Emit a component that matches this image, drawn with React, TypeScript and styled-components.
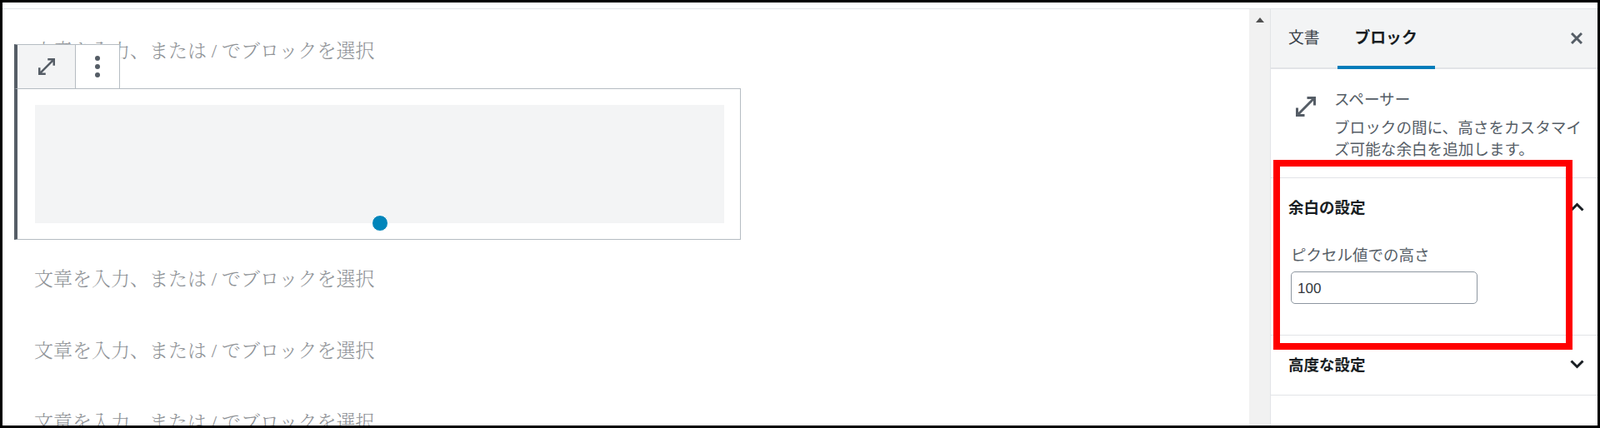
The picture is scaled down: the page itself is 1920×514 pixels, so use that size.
import React from 'react'
import styled, { createGlobalStyle } from 'styled-components'

const GlobalStyle = createGlobalStyle`
  html, body {
    margin: 0;
    padding: 0;
    background: #fff;
  }
  * {
    box-sizing: border-box;
  }
`

const Frame = styled.div`
  width: 1920px;
  height: 514px;
  padding-top: 7px;
  border: 3px solid #000;
  background: #fff;
  overflow: hidden;
  font-family: 'Noto Sans CJK JP', sans-serif;
`

const Workspace = styled.div`
  display: flex;
  height: 100%;
  border-top: 1px solid #e2e4e7;
`

const Editor = styled.main`
  flex: 1;
  min-width: 0;
  padding-top: 34px;
  overflow: hidden;
`

const Placeholder = styled.p`
  margin: 0 0 0 38px;
  height: 34px;
  font-family: 'Liberation Serif', 'Noto Serif CJK JP', 'Noto Sans CJK JP', serif;
  font-size: 23px;
  font-weight: 300;
  line-height: 34px;
  color: #8f9397;
  white-space: nowrap;

  & + & {
    margin-top: 52px;
  }
`

const SpacerBlock = styled.section`
  position: relative;
  width: 872px;
  height: 182px;
  margin: 27px 0 31px 14px;
  padding: 19px 19px 19px 21px;
  border: 1px solid #b5bcc2;
  border-left: 4px solid #555d66;
`

const BlockToolbar = styled.div`
  position: absolute;
  left: -4px;
  bottom: calc(100% + 1px);
  display: flex;
  height: 53px;
  border-top: 1px solid #b5bcc2;
  border-left: 4px solid #555d66;
  background: #fff;
`

const ToolButton = styled.div<{ $active?: boolean; $width: number }>`
  display: flex;
  align-items: center;
  justify-content: center;
  width: ${(p) => p.$width}px;
  border-right: 1px solid #b5bcc2;
  background: ${(p) => (p.$active ? '#f3f4f5' : '#fff')};
  color: #555d66;
`

const SpacerArea = styled.div`
  position: relative;
  height: 142px;
  background: #f3f4f5;
`

const ResizeHandle = styled.span`
  position: absolute;
  left: 50%;
  bottom: -10px;
  width: 20px;
  height: 20px;
  margin-left: -10px;
  border: 1px solid #fff;
  border-radius: 50%;
  background: #0085ba;
`

const Scrollbar = styled.div`
  flex: none;
  display: flex;
  justify-content: center;
  width: 25px;
  padding-top: 10px;
  background: #f1f1f1;
`

const ScrollArrow = styled.span`
  width: 0;
  height: 0;
  border-left: 5px solid transparent;
  border-right: 5px solid transparent;
  border-bottom: 6px solid #505050;
`

const Sidebar = styled.aside`
  position: relative;
  flex: none;
  width: 393px;
  border-left: 1px solid #e2e4e7;
  color: #191e23;
`

const SidebarHeader = styled.header`
  display: flex;
  align-items: stretch;
  height: 72px;
  padding-right: 18px;
  border-bottom: 2px solid #e2e4e7;
  background: #f3f4f5;
`

const Tab = styled.div<{ $active?: boolean }>`
  display: flex;
  align-items: center;
  height: 72px;
  padding: 0 21px 4px;
  border-bottom: 4px solid ${(p) => (p.$active ? '#007cba' : 'transparent')};
  font-size: 18.8px;
  font-weight: ${(p) => (p.$active ? 700 : 400)};
  color: ${(p) => (p.$active ? '#191e23' : '#3b4249')};
`

const HeaderClose = styled.div`
  display: flex;
  align-items: center;
  margin-left: auto;
  color: #555d66;
`

const BlockCard = styled.div`
  display: flex;
  gap: 16px;
  padding: 22px 12px 22px 24px;
  color: #555d66;
`

const CardIcon = styled.div`
  flex: none;
  width: 36px;
  height: 36px;
  margin-top: 5px;
`

const CardTitle = styled.div`
  margin-bottom: 8px;
  font-size: 18.6px;
  line-height: 26px;
`

const CardText = styled.div`
  font-size: 18.6px;
  line-height: 26px;
`

const Panel = styled.section`
  border-top: 1px solid #e2e4e7;

  &:last-of-type {
    border-bottom: 1px solid #e2e4e7;
  }
`

const PanelHeader = styled.div`
  display: flex;
  align-items: center;
  justify-content: space-between;
  height: 71px;
  padding: 0 16px 3px 21px;
  font-size: 18.5px;
  font-weight: 700;
`

const PanelBody = styled.div`
  padding: 7px 0 37px 24px;
`

const FieldLabel = styled.label`
  display: block;
  margin-bottom: 8px;
  font-size: 18.5px;
  line-height: 26px;
  color: #555d66;
`

const NumberInput = styled.input`
  display: block;
  width: 224px;
  height: 39px;
  padding: 2px 7px 0;
  border: 1px solid #8d96a0;
  border-radius: 5px;
  background: #fff;
  font-family: 'Liberation Sans', Arial, sans-serif;
  font-size: 17px;
  color: #32373c;
  outline: none;
`

const Annotation = styled.div`
  position: absolute;
  top: 181px;
  left: 3px;
  width: 359px;
  height: 228px;
  border: 8px solid #f00;
  pointer-events: none;
`

const ResizeIcon = ({ size }: { size: number }) => (
  <svg width={size} height={size} viewBox="0 0 24 24" fill="currentColor">
    <path d="M13 4v2h3.59L6 16.59V13H4v7h7v-2H7.41L18 7.41V11h2V4h-7" />
  </svg>
)

const MoreIcon = () => (
  <svg width="6" height="26" viewBox="0 0 6 26" fill="currentColor">
    <circle cx="3" cy="3" r="3" />
    <circle cx="3" cy="13" r="3" />
    <circle cx="3" cy="23" r="3" />
  </svg>
)

const CloseIcon = () => (
  <svg width="14" height="14" viewBox="0 0 14 14" fill="none" stroke="currentColor" strokeWidth="3">
    <path d="M1 1l12 12M13 1L1 13" />
  </svg>
)

const Chevron = ({ up }: { up?: boolean }) => (
  <svg width="17" height="11" viewBox="0 0 17 11" fill="none" stroke="#191e23" strokeWidth="3">
    <path d={up ? 'M1.5 9.5l7-7 7 7' : 'M1.5 1.5l7 7 7-7'} />
  </svg>
)

const placeholder = '文章を入力、または / でブロックを選択'

const App = () => {
  return (
    <>
      <GlobalStyle />
      <Frame>
        <Workspace>
          <Editor>
            <Placeholder>{placeholder}</Placeholder>
            <SpacerBlock>
              <BlockToolbar>
                <ToolButton $active $width={70}>
                  <ResizeIcon size={30} />
                </ToolButton>
                <ToolButton $width={53}>
                  <MoreIcon />
                </ToolButton>
              </BlockToolbar>
              <SpacerArea>
                <ResizeHandle />
              </SpacerArea>
            </SpacerBlock>
            <Placeholder>{placeholder}</Placeholder>
            <Placeholder>{placeholder}</Placeholder>
            <Placeholder>{placeholder}</Placeholder>
          </Editor>
          <Scrollbar>
            <ScrollArrow />
          </Scrollbar>
          <Sidebar>
            <SidebarHeader>
              <Tab>文書</Tab>
              <Tab $active>ブロック</Tab>
              <HeaderClose>
                <CloseIcon />
              </HeaderClose>
            </SidebarHeader>
            <BlockCard>
              <CardIcon>
                <ResizeIcon size={36} />
              </CardIcon>
              <div>
                <CardTitle>スペーサー</CardTitle>
                <CardText>ブロックの間に、高さをカスタマイズ可能な余白を追加します。</CardText>
              </div>
            </BlockCard>
            <Panel>
              <PanelHeader>
                余白の設定
                <Chevron up />
              </PanelHeader>
              <PanelBody>
                <FieldLabel htmlFor="spacer-height">ピクセル値での高さ</FieldLabel>
                <NumberInput id="spacer-height" type="text" defaultValue="100" />
              </PanelBody>
            </Panel>
            <Panel>
              <PanelHeader>
                高度な設定
                <Chevron />
              </PanelHeader>
            </Panel>
            <Annotation />
          </Sidebar>
        </Workspace>
      </Frame>
    </>
  )
}

export default App
